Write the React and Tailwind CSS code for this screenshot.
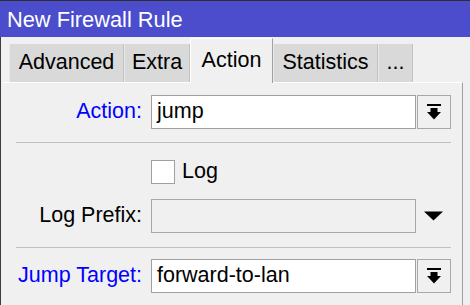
import React from 'react';

const font = { fontFamily: '"Liberation Sans", Arial, sans-serif' };

function ComboIcon() {
  return (
    <svg width="14" height="16" viewBox="0 0 14 16" className="block">
      <rect x="0" y="0" width="14" height="2" fill="#000" />
      <rect x="3.5" y="4" width="7" height="5" fill="#000" />
      <polygon points="0,8 14,8 7,15.5" fill="#000" />
    </svg>
  );
}

function Tab({ label, width, active }) {
  if (active) {
    return (
      <div
        className={`${width} h-[45px] -mb-px relative z-10 flex items-center justify-center bg-[#f0f0f0] border-t border-l border-white border-r border-r-[#a0a0a0] text-black`}
      >
        {label}
      </div>
    );
  }
  return (
    <div
      className={`${width} h-[38px] flex items-center justify-center bg-[#d9d9d9] border-r border-[#c2c2c2] border-l border-l-[#e9e9e9] text-black`}
    >
      {label}
    </div>
  );
}

function Row({ label, blue, children }) {
  return (
    <div className="flex items-center h-[34px]">
      <div className={`w-[126px] text-right whitespace-nowrap ${blue ? 'text-[#0000ff]' : 'text-black'}`}>{label}</div>
      <div className="ml-[9px] flex flex-1 items-center h-full">{children}</div>
    </div>
  );
}

export default function App() {
  return (
    <div className="w-[470px] h-[305px] bg-[#f0f0f0] overflow-hidden text-[21.5px] leading-none" style={font}>
      <div className="h-[37px] border-t border-[#2e2e2e] bg-[#4b4dcc] text-white text-[21.8px] flex items-center pl-[7px] pt-[2px]">
        New Firewall Rule
      </div>
      <div className="border-l border-[#3c3c3c] h-[268px] flex flex-col">
        <div className="flex items-end h-[45px] pl-[8px]">
          <Tab label="Advanced" width="w-[115px]" />
          <Tab label="Extra" width="w-[66px]" />
          <Tab label="Action" width="w-[83px]" active />
          <Tab label="Statistics" width="w-[105px]" />
          <Tab label="..." width="w-[35px]" />
        </div>
        <div className="ml-[2px] w-[460px] flex-1 border-t border-white border-r border-r-[#a0a0a0] pl-[13px] pr-[11px] pt-[12px]">
          <Row label="Action:" blue>
            <div className="flex-1 h-full bg-white border border-[#a0a0a0] flex items-center pl-[5px]">jump</div>
            <div className="ml-px w-[34px] h-full bg-[#f0f0f0] border border-[#a8a8a8] flex items-center justify-center">
              <ComboIcon />
            </div>
          </Row>
          <div className="mt-[13px] h-px bg-[#c0c0c0]" />
          <div className="mt-[17px] flex items-center h-[24px] pl-[135px]">
            <div className="w-[24px] h-[24px] bg-white border border-[#a0a0a0]" />
            <span className="ml-[7px]">Log</span>
          </div>
          <div className="mt-[15px]">
            <Row label="Log Prefix:">
              <div className="flex-1 h-full bg-[#f0f0f0] border border-[#a8a8a8]" />
              <div className="ml-px w-[34px] h-full flex items-center justify-center pr-[2px]">
                <svg width="19" height="10" viewBox="0 0 19 10" className="block">
                  <polygon points="0,0.5 19,0.5 9.5,9.5" fill="#000" />
                </svg>
              </div>
            </Row>
          </div>
          <div className="mt-[14px] h-px bg-[#c0c0c0]" />
          <div className="mt-[11px]">
            <Row label="Jump Target:" blue>
              <div className="flex-1 h-full bg-white border border-[#a0a0a0] flex items-center pl-[5px]">forward-to-lan</div>
              <div className="ml-px w-[34px] h-full bg-[#f0f0f0] border border-[#a8a8a8] flex items-center justify-center">
                <ComboIcon />
              </div>
            </Row>
          </div>
        </div>
      </div>
    </div>
  );
}
